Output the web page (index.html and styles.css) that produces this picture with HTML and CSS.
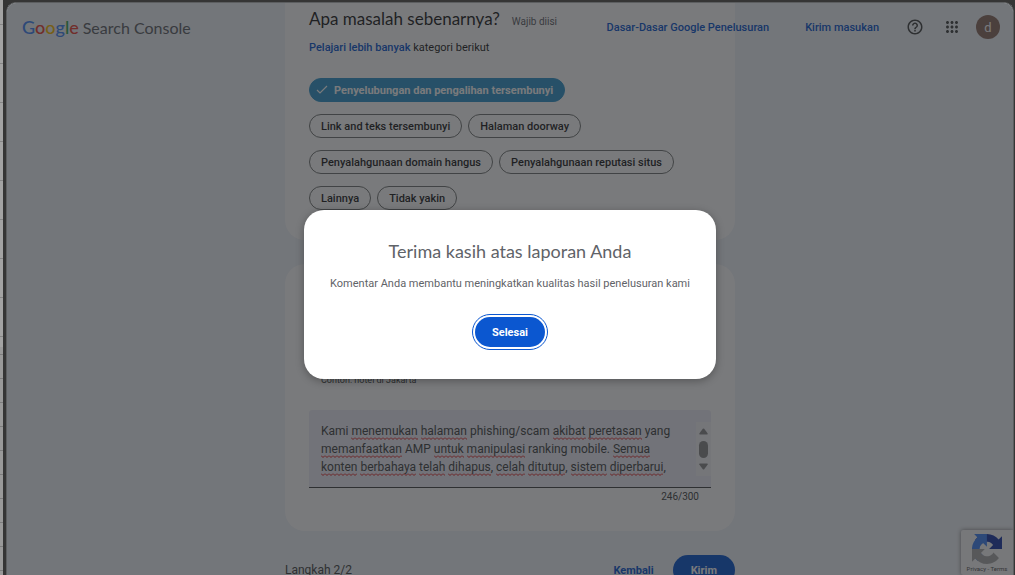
FILE: index.html
```html
<!DOCTYPE html>
<html lang="id">
<head>
    <meta charset="UTF-8">
    <meta name="viewport" content="width=device-width, initial-scale=1.0">
    <title>Google Search Console</title>
    <link rel="stylesheet" href="styles.css">
</head>
<body>
    <div class="sheet-edge"></div>
    <div class="window">
        <header class="topbar">
            <a href="#" class="logo"><span class="logo-google"><span class="blue">G</span><span class="red">o</span><span class="yellow">o</span><span class="blue">g</span><span class="green">l</span><span class="red">e</span></span><span class="logo-product">Search Console</span></a>
            <nav class="topnav">
                <a href="#">Dasar-Dasar Google Penelusuran</a>
                <a href="#">Kirim masukan</a>
            </nav>
            <div class="tools">
                <button class="icon-button" aria-label="Bantuan">
                    <svg width="18" height="18" viewBox="0 0 24 24" fill="currentColor"><path d="M11 18h2v-2h-2v2zm1-16C6.480 2 2 6.480 2 12s4.480 10 10 10 10-4.480 10-10S17.520 2 12 2zm0 18c-4.410 0-8-3.590-8-8s3.590-8 8-8 8 3.590 8 8-3.590 8-8 8zm0-14c-2.210 0-4 1.790-4 4h2c0-1.100.9-2 2-2s2 .9 2 2c0 2-3 1.750-3 5h2c0-2.250 3-2.500 3-5 0-2.210-1.790-4-4-4z"/></svg>
                </button>
                <button class="icon-button" aria-label="Aplikasi Google">
                    <svg width="18" height="18" viewBox="0 0 24 24" fill="currentColor"><path d="M6 8c1.100 0 2-.9 2-2s-.9-2-2-2-2 .9-2 2 .9 2 2 2zm6 12c1.100 0 2-.9 2-2s-.9-2-2-2-2 .9-2 2 .9 2 2 2zm-6 0c1.100 0 2-.9 2-2s-.9-2-2-2-2 .9-2 2 .9 2 2 2zm0-6c1.100 0 2-.9 2-2s-.9-2-2-2-2 .9-2 2 .9 2 2 2zm6 0c1.100 0 2-.9 2-2s-.9-2-2-2-2 .9-2 2 .9 2 2 2zm4-8c0 1.100.9 2 2 2s2-.9 2-2-.9-2-2-2-2 .9-2 2zm-4 2c1.100 0 2-.9 2-2s-.9-2-2-2-2 .9-2 2 .9 2 2 2zm6 6c1.100 0 2-.9 2-2s-.9-2-2-2-2 .9-2 2 .9 2 2 2zm0 6c1.100 0 2-.9 2-2s-.9-2-2-2-2 .9-2 2 .9 2 2 2z"/></svg>
                </button>
            </div>
            <button class="avatar">d</button>
        </header>

        <main class="report">
            <section class="card card-category">
                <div class="card-title">
                    <h2>Apa masalah sebenarnya?</h2>
                    <span class="required">Wajib diisi</span>
                </div>
                <p class="more"><a href="#">Pelajari lebih banyak</a> kategori berikut</p>
                <div class="chips">
                    <div class="chip-row">
                        <button class="chip selected">
                            <svg width="14" height="12" viewBox="0 0 14 12" fill="none" stroke="currentColor" stroke-width="1.200"><path d="M2 6l3 3 7-7"/></svg>
                            Penyelubungan dan pengalihan tersembunyi
                        </button>
                    </div>
                    <div class="chip-row">
                        <button class="chip">Link and teks tersembunyi</button>
                        <button class="chip">Halaman doorway</button>
                    </div>
                    <div class="chip-row">
                        <button class="chip">Penyalahgunaan domain hangus</button>
                        <button class="chip">Penyalahgunaan reputasi situs</button>
                    </div>
                    <div class="chip-row">
                        <button class="chip">Lainnya</button>
                        <button class="chip">Tidak yakin</button>
                    </div>
                </div>
            </section>

            <section class="card card-details">
                <p class="hint">Contoh: hotel di Jakarta</p>
                <div class="field">
                    <div class="field-text">
                        <!-- spelling marks sit behind the textarea -->
                        <div class="spelling" aria-hidden="true">Kami <u>menemukan</u> <u>halaman</u> phishing/scam <u>akibat</u> <u>peretasan</u> yang<br><u>memanfaatkan</u> AMP <u>untuk</u> <u>manipulasi</u> ranking mobile. <u>Semua</u><br><u>konten</u> <u>berbahaya</u> <u>telah</u> <u>dihapus</u>, <u>celah</u> <u>ditutup</u>, <u>sistem</u> <u>diperbarui</u>,</div>
                        <textarea rows="3" spellcheck="false" aria-label="Detail tambahan">Kami menemukan halaman phishing/scam akibat peretasan yang
memanfaatkan AMP untuk manipulasi ranking mobile. Semua
konten berbahaya telah dihapus, celah ditutup, sistem diperbarui,</textarea>
                    </div>
                    <div class="scrollbar">
                        <svg width="9" height="7" viewBox="0 0 9 7" fill="currentColor"><path d="M3.800 0.800Q4.500 0 5.200 0.800L8.700 5.500Q9 6.500 8 6.500H1Q0 6.500 0.300 5.500z"/></svg>
                        <span class="thumb"></span>
                        <svg width="9" height="7" viewBox="0 0 9 7" fill="currentColor"><path d="M3.800 6.200Q4.500 7 5.200 6.200L8.700 1.500Q9 0.500 8 0.500H1Q0 0.500 0.300 1.500z"/></svg>
                    </div>
                </div>
                <p class="counter">246/300</p>
            </section>

            <footer class="actions">
                <span class="step">Langkah 2/2</span>
                <button class="text-button">Kembali</button>
                <button class="send-button">Kirim</button>
            </footer>
        </main>

        <aside class="recaptcha">
            <svg width="30" height="30" viewBox="0 0 64 64">
                <path fill="#1c3aa9" d="M64 31.955c-.001-.46-.012-.918-.033-1.373V4.640l-7.173 7.173C50.924 4.627 41.995.035 31.995.035c-10.407 0-19.652 4.971-25.500 12.670l11.757 11.881a15.580 15.580 0 0 1 4.763-5.345c2.054-1.603 4.964-2.914 8.980-2.914.485 0 .860.057 1.135.163 4.976.393 9.288 3.139 11.827 7.124l-8.322 8.322c10.541-.041 22.449-.066 27.365.019"/>
                <path fill="#4285f4" d="M31.862.035c-.460.001-.918.012-1.373.033H4.547l7.173 7.173C4.535 13.111-.058 22.040-.058 32.040c0 10.407 4.971 19.652 12.670 25.500l11.881-11.757a15.580 15.580 0 0 1-5.345-4.763c-1.603-2.054-2.914-4.964-2.914-8.980 0-.485.057-.860.163-1.135.393-4.976 3.139-9.288 7.124-11.827l8.322 8.322c-.041-10.541-.066-22.449.019-27.365"/>
                <path fill="#ababab" d="M-.058 32.040c.001.460.012.918.033 1.373v25.942l7.173-7.173c5.870 7.186 14.799 11.778 24.799 11.778 10.407 0 19.652-4.971 25.500-12.670L45.690 39.409a15.580 15.580 0 0 1-4.763 5.345c-2.054 1.603-4.964 2.914-8.980 2.914-.485 0-.860-.057-1.135-.163-4.976-.393-9.288-3.139-11.827-7.124l8.322-8.322c-10.541.041-22.449.066-27.365-.019"/>
            </svg>
            <span>Privacy - Terms</span>
        </aside>

        <div class="scrim">
            <div class="dialog" role="dialog" aria-modal="true" aria-labelledby="dialog-title">
                <h1 id="dialog-title">Terima kasih atas laporan Anda</h1>
                <p>Komentar Anda membantu meningkatkan kualitas hasil penelusuran kami</p>
                <button class="done-button">Selesai</button>
            </div>
        </div>
    </div>
</body>
</html>
```
FILE: styles.css
```css
* {
    box-sizing: border-box;
}

html, body {
    margin: 0;
    height: 100%;
}

body {
    display: flex;
    overflow: hidden;
    background: #353535;
    font-family: Roboto, "Liberation Sans", sans-serif;
    font-size: 11px;
    color: #1f1f1f;
}

h1, h2, p {
    margin: 0;
    font-weight: 400;
}

a {
    color: #0b57d0;
    text-decoration: none;
}

button {
    padding: 0;
    border: none;
    background: none;
    font: inherit;
    color: inherit;
    cursor: pointer;
}

/* strip of the spreadsheet behind the window */
.sheet-edge {
    width: 3px;
    background:
        repeating-linear-gradient(#a3a3a3 0 24px, #858585 24px 25px, #a3a3a3 25px 39px) top / 100% 347px no-repeat,
        repeating-linear-gradient(#999 0 18px, #7c7c7c 18px 19px, #999 19px 24px);
}

.window {
    position: relative;
    flex: 1;
    margin: 2px 1px 0 3px;
    border: 1px solid #5c5e60;
    border-bottom: none;
    border-radius: 10px 10px 0 0;
    background: #f0f4f9;
    overflow: hidden;
}

.topbar {
    position: absolute;
    top: 0;
    left: 0;
    right: 0;
    display: flex;
    align-items: center;
    height: 48px;
    padding: 0 13px 0 15px;
}

.logo {
    display: flex;
    align-items: baseline;
    gap: 4px;
    margin-right: auto;
    font-family: Lato, sans-serif;
    line-height: 20px;
    color: #5f6368;
    white-space: nowrap;
}

.logo-google {
    font-size: 18px;
    font-weight: 500;
}

.logo-product {
    font-size: 16px;
}

.blue { color: #4285f4; }
.red { color: #ea4335; }
.yellow { color: #fbbc04; }
.green { color: #34a853; }

.topnav {
    display: flex;
    gap: 36px;
    font-weight: 500;
}

.tools {
    display: flex;
    gap: 19px;
    margin: 0 15px 0 27px;
}

.icon-button {
    display: flex;
    color: #444746;
}

.avatar {
    width: 24px;
    height: 24px;
    border-radius: 50%;
    background: #8d6e63;
    color: #fff;
    font-size: 13px;
}

.report {
    width: 450px;
    max-width: 100%;
    margin: 0 auto;
}

.card {
    padding: 0 24px;
    background: #fff;
}

.card-category {
    padding-top: 4px;
    padding-bottom: 30px;
    border-radius: 0 0 20px 20px;
}

.card-title {
    display: flex;
    align-items: baseline;
    gap: 12px;
}

.card-title h2 {
    font-family: Lato, sans-serif;
    font-size: 17px;
    line-height: 24px;
}

.required {
    font-size: 10px;
    color: #5f6368;
}

.more {
    margin-top: 9px;
    line-height: 16px;
}

.more a {
    font-weight: 500;
}

.chips {
    display: flex;
    flex-direction: column;
    gap: 12px;
    margin-top: 22px;
}

.chip-row {
    display: flex;
    gap: 6px;
}

.chip {
    display: flex;
    align-items: center;
    height: 24px;
    padding: 0 11px;
    border: 1px solid #747775;
    border-radius: 12px;
    font-weight: 500;
    white-space: nowrap;
}

.chip.selected {
    gap: 5px;
    padding: 0 11px 0 5px;
    border-color: #3397cc;
    background: #3397cc;
    color: #fff;
    font-weight: 700;
}

.card-details {
    margin-top: 24px;
    padding-top: 110px;
    padding-bottom: 28px;
    border-radius: 20px;
}

.hint {
    padding-left: 12px;
    font-size: 9px;
    line-height: 12px;
    color: #444746;
}

.field {
    display: flex;
    margin-top: 24px;
    padding: 12px 0 11px;
    border-bottom: 1px solid #444746;
    border-radius: 3px 3px 0 0;
    background: #eeeef8;
}

.field-text {
    display: grid;
    flex: 1;
    padding-left: 12px;
}

.spelling,
.field textarea {
    grid-area: 1 / 1;
    margin: 0;
    padding: 0;
    border: none;
    font-family: Roboto, sans-serif;
    font-size: 12px;
    line-height: 18px;
    white-space: pre;
}

.spelling {
    color: transparent;
}

.spelling u {
    padding-bottom: 2px;
    background: url("data:image/svg+xml,%3Csvg xmlns='http://www.w3.org/2000/svg' width='4' height='3'%3E%3Cpath d='M0 .5L2 2.500L4 .5' fill='none' stroke='%23e02020'/%3E%3C/svg%3E") left bottom repeat-x;
    text-decoration: none;
}

.field textarea {
    position: relative;
    width: 100%;
    resize: none;
    overflow: hidden;
    outline: none;
    background: none;
    color: #444746;
}

.scrollbar {
    display: flex;
    flex-direction: column;
    align-items: center;
    justify-content: space-between;
    width: 15px;
    padding: 6px 0;
    background: #f4f4f8;
    color: #8b8b8b;
}

.scrollbar .thumb {
    width: 9px;
    height: 17px;
    border-radius: 5px;
    background: #8b8b8b;
}

.counter {
    margin-top: 3px;
    padding-right: 12px;
    font-size: 10px;
    line-height: 12px;
    text-align: right;
    color: #444746;
}

.actions {
    display: flex;
    align-items: center;
    gap: 19px;
    margin-top: 24px;
    font-weight: 700;
}

.step {
    margin-right: auto;
    font-size: 12px;
    font-weight: 400;
    color: #444746;
}

.text-button {
    color: #0b57d0;
}

.send-button {
    height: 30px;
    padding: 0 18px;
    border-radius: 15px;
    background: #0b57d0;
    color: #fff;
}

.recaptcha {
    position: absolute;
    right: 0;
    bottom: 0;
    display: flex;
    flex-direction: column;
    align-items: center;
    width: 52px;
    height: 45px;
    padding-top: 4px;
    border-radius: 2px 0 0 2px;
    background: #f9f9f9;
    box-shadow: 0 0 4px #808080;
    font-size: 6px;
    line-height: 10px;
    color: #555;
}

.scrim {
    position: absolute;
    inset: 0;
    display: flex;
    align-items: center;
    justify-content: center;
    padding-top: 11px;
    background: rgba(32, 33, 36, 0.6);
}

.dialog {
    padding: 29px 26px 32px;
    border-radius: 20px;
    background: #fff;
    box-shadow: 0 2px 8px rgba(0, 0, 0, 0.3);
    text-align: center;
    color: #5f6368;
}

.dialog h1 {
    font-family: Lato, sans-serif;
    font-size: 18px;
    line-height: 24px;
}

.dialog p {
    margin-top: 13px;
    line-height: 16px;
}

.done-button {
    height: 30px;
    margin-top: 25px;
    padding: 0 17px;
    border-radius: 15px;
    outline: 1px solid #0b57d0;
    outline-offset: 2px;
    background: #0b57d0;
    font-weight: 700;
    color: #fff;
}
```
